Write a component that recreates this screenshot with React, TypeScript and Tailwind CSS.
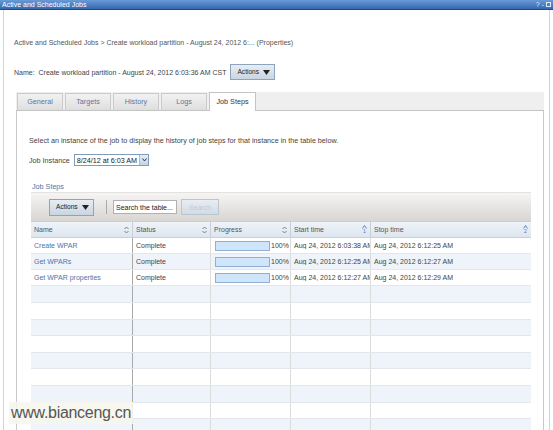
import React from 'react';

type Step = { name: string; status: string; start: string; stop: string };

const steps: Step[] = [
  { name: 'Create WPAR', status: 'Complete', start: 'Aug 24, 2012 6:03:38 AM', stop: 'Aug 24, 2012 6:12:25 AM' },
  { name: 'Get WPARs', status: 'Complete', start: 'Aug 24, 2012 6:12:25 AM', stop: 'Aug 24, 2012 6:12:27 AM' },
  { name: 'Get WPAR properties', status: 'Complete', start: 'Aug 24, 2012 6:12:27 AM', stop: 'Aug 24, 2012 6:12:29 AM' },
];

const tabs = ['General', 'Targets', 'History', 'Logs', 'Job Steps'];

function Caret() {
  return (
    <svg width="7" height="5" viewBox="0 0 7 5" className="shrink-0">
      <path d="M0 0 L7 0 L3.5 5 Z" fill="#222" />
    </svg>
  );
}

function SortBoth() {
  return (
    <svg width="5" height="8" viewBox="0 0 5 8" className="shrink-0">
      <path d="M0.5 3 L2.5 1 L4.5 3" stroke="#777" strokeWidth="0.9" fill="none" />
      <path d="M0.5 5 L2.5 7 L4.5 5" stroke="#777" strokeWidth="0.9" fill="none" />
    </svg>
  );
}

function SortRank({ n }: { n: number }) {
  return (
    <div className="flex flex-col items-center leading-none shrink-0">
      <svg width="5" height="4" viewBox="0 0 5 4">
        <path d="M0.5 3.5 L2.5 0.5 L4.5 3.5" stroke="#4a78b8" strokeWidth="0.9" fill="none" />
      </svg>
      <span className="text-[5px] text-[#4a78b8]">{n}</span>
    </div>
  );
}

function ActionsButton({ h }: { h: string }) {
  return (
    <div
      className={`${h} w-[45px] flex items-center justify-between pl-[6px] pr-[4px] border border-[#8ea3bd] bg-gradient-to-b from-[#e7edf4] to-[#c9d5e1] text-[#222] text-[6.6px]`}
    >
      <span>Actions</span>
      <Caret />
    </div>
  );
}

const cols = ['w-[102px]', 'w-[78px]', 'w-[80px]', 'w-[80px]', 'flex-1'];

export default function App() {
  const empty = Array.from({ length: 11 });

  return (
    <div className="w-[553px] h-[430px] overflow-hidden relative bg-white text-[7.2px] leading-none text-[#444] font-['Liberation_Sans',Tahoma,sans-serif]">
      {/* window title bar */}
      <div className="h-[10px] flex items-center justify-between px-[2px] bg-gradient-to-b from-[#6a9ad6] to-[#3569b0] border-b border-[#234a80]">
        <span className="text-white text-[7px]">Active and Scheduled Jobs</span>
        <div className="flex items-center gap-[2px] text-[7px] text-[#dfe9f7]">
          <span>?</span>
          <span>-</span>
          <span className="w-[5px] h-[5px] border border-[#dfe9f7]" />
        </div>
      </div>

      <div className="mx-[3px] h-[420px] border-l border-r border-[#d4d4d4] flex flex-col">
        <div className="pl-[10px] pt-[29px] text-[#555] text-[7px]">
          Active and Scheduled Jobs &gt; Create workload partition - August 24, 2012 6:... (Properties)
        </div>

        <div className="pl-[10px] mt-[18px] flex items-center gap-[4px] text-[7px] text-[#444]">
          <span>Name:&nbsp; Create workload partition - August 24, 2012 6:03:36 AM CST</span>
          <ActionsButton h="h-[16px]" />
        </div>

        {/* tabs */}
        <div className="ml-[12px] mr-[5px] mt-[12px] h-[19px] shrink-0 flex items-end gap-[2px] pl-[1px] bg-[#efefef] border-b border-[#c4c4c4]">
          {tabs.map((t) => {
            const active = t === 'Job Steps';
            return (
              <div
                key={t}
                className={
                  active
                    ? 'w-[47px] h-[19px] -mb-px flex items-center justify-center bg-white border border-b-0 border-[#c4c4c4] text-[#333]'
                    : 'w-[46px] h-[17px] flex items-center justify-center bg-gradient-to-b from-[#f2f2f2] to-[#dedede] border border-b-0 border-[#cacaca] text-[#5a76a0]'
                }
              >
                {t}
              </div>
            );
          })}
        </div>

        {/* tab panel */}
        <div className="ml-[12px] mr-[5px] flex-1 min-h-0 border-l border-r border-[#c9c9c9] pl-[12px] pr-[12px] flex flex-col">
          <div className="mt-[26px]">
            Select an instance of the job to display the history of job steps for that instance in the table below.
          </div>

          <div className="mt-[10px] flex items-center gap-[4px]">
            <span>Job Instance</span>
            <div className="h-[12px] flex items-stretch border border-[#7f9db9] bg-white">
              <span className="px-[2px] flex items-center text-[#222]">8/24/12 at 6:03 AM</span>
              <span className="w-[9px] flex items-center justify-center bg-gradient-to-b from-[#e8eef6] to-[#c5d3e4] border-l border-[#a8bbd2]">
                <svg width="5" height="4" viewBox="0 0 5 4">
                  <path d="M0.5 0.5 L2.5 3 L4.5 0.5" stroke="#334" strokeWidth="1" fill="none" />
                </svg>
              </span>
            </div>
          </div>

          <div className="mt-[17px] ml-[3px] text-[#4f73a8]">Job Steps</div>

          {/* table */}
          <div className="mt-[2px] ml-[2px] flex flex-col flex-1 min-h-0 overflow-hidden text-[7px]">
            <div className="h-[29px] shrink-0 flex items-center pl-[18px] bg-gradient-to-b from-[#f6f5f4] to-[#d8d5d2] border-t border-[#e4e2e0]">
              <ActionsButton h="h-[17px]" />
              <div className="ml-[12px] w-px h-[14px] bg-[#aaa]" />
              <div className="ml-[6px] w-[64px] h-[14px] flex items-center px-[2px] bg-white border border-[#b0b0b0] text-[#222] whitespace-nowrap overflow-hidden">
                Search the table...
              </div>
              <div className="ml-[4px] w-[38px] h-[16px] flex items-center justify-center bg-gradient-to-b from-[#e8edf2] to-[#d2dbe4] border border-[#bac6d2] text-[#c2ccd6]">
                Search
              </div>
            </div>

            {/* header */}
            <div className="h-[17px] shrink-0 flex bg-gradient-to-b from-[#eef3f8] to-[#dde6ef] border-t border-b border-[#c6d0da] text-[#555]">
              {[
                { t: 'Name', icon: <SortBoth /> },
                { t: 'Status', icon: <SortBoth /> },
                { t: 'Progress', icon: <SortBoth /> },
                { t: 'Start time', icon: <SortRank n={1} /> },
                { t: 'Stop time', icon: <SortRank n={2} /> },
              ].map((c, i) => (
                <div
                  key={c.t}
                  className={`${cols[i]} flex items-center justify-between pl-[3px] pr-[3px] ${i < 4 ? 'border-r border-[#c6d0da]' : ''}`}
                >
                  <span>{c.t}</span>
                  {c.icon}
                </div>
              ))}
            </div>

            {steps.map((s, r) => (
              <div
                key={s.name}
                className={`h-[16px] shrink-0 flex border-b border-[#e3e6ea] ${r % 2 === 1 ? 'bg-[#eef4fa]' : 'bg-white'}`}
              >
                <div className="w-[102px] flex items-center pl-[3px] border-r border-[#a9a9a9] text-[#4f73a8]">{s.name}</div>
                <div className="w-[78px] flex items-center pl-[3px] border-r border-[#dcdcdc] text-[#444]">{s.status}</div>
                <div className="w-[80px] flex items-center pl-[4px] border-r border-[#dcdcdc] text-[#444]">
                  <div className="w-[55px] h-[10px] bg-[#cfe5f9] border border-[#8fb0d4]" />
                  <span className="ml-px">100%</span>
                </div>
                <div className="w-[80px] flex items-center pl-[3px] border-r border-[#dcdcdc] text-[#444] whitespace-nowrap">
                  <span className="block w-[76px] overflow-hidden">{s.start}</span>
                </div>
                <div className="flex-1 flex items-center pl-[3px] text-[#444] whitespace-nowrap">{s.stop}</div>
              </div>
            ))}

            {empty.map((_, r) => (
              <div
                key={r}
                className={`h-[16.6px] shrink-0 flex border-b border-[#e3e6ea] ${r % 2 === 0 ? 'bg-[#eef4fa]' : 'bg-white'}`}
              >
                <div className="w-[102px] border-r border-[#a9a9a9]" />
                <div className="w-[78px] border-r border-[#dcdcdc]" />
                <div className="w-[80px] border-r border-[#dcdcdc]" />
                <div className="w-[80px] border-r border-[#dcdcdc]" />
                <div className="flex-1" />
              </div>
            ))}
          </div>
        </div>
      </div>

      {/* site watermark */}
      <div className="absolute left-[9px] top-[402px] w-[124px] h-[22px] flex items-center pl-[2px] bg-[#f6f6ee]/90 text-[16px] text-[#555] font-['Liberation_Sans',sans-serif] tracking-[-0.3px]">
        www.bianceng.cn
      </div>
    </div>
  );
}
